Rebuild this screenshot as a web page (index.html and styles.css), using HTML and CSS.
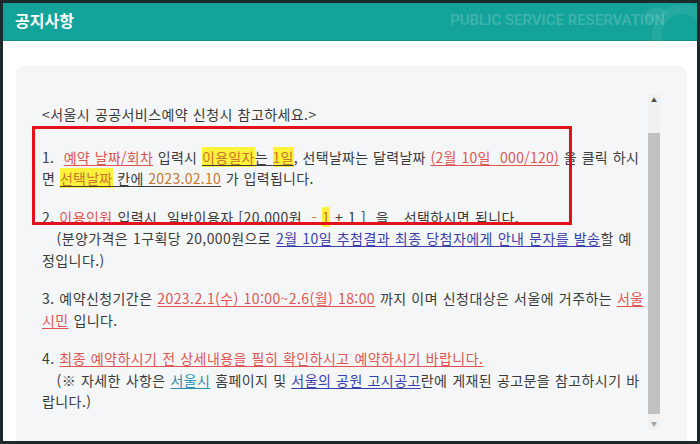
FILE: index.html
```html
<!DOCTYPE html>
<html lang="ko">
<head>
<meta charset="utf-8">
<title>공지사항</title>
<link rel="stylesheet" href="styles.css">
</head>
<body>
<div class="frame">
  <header class="header">
    <h1 class="title">공지사항</h1>
    <span class="tagline">PUBLIC SERVICE RESERVATION</span>
    <svg class="deco" width="60" height="38" viewBox="0 0 60 38" aria-hidden="true">
      <circle cx="46" cy="32" r="26" fill="none" stroke="rgba(255,255,255,0.07)" stroke-width="10"/>
      <path d="M6 12 C14 2 26 2 32 10 C24 12 16 16 12 22 Z" fill="rgba(255,255,255,0.08)"/>
    </svg>
  </header>
  <main class="body">
    <section class="panel">
      <div class="scrollarea">
        <div class="content">
          <p class="para first">&lt;서울시 공공서비스예약 신청시 참고하세요.&gt;</p>
          <p class="para tight">1.&nbsp; <span class="red u">예약 날짜/회차</span> 입력시 <span class="u"><span class="hl org">이용일자</span>는 <span class="hl org">1일</span></span>, 선택날짜는 달력날짜 <span class="red u">(2월 10일&nbsp; 000/120)</span> 을 클릭 하시면 <span class="u"><span class="hl org">선택날짜</span> 칸에 <span class="org">2023.02.10</span></span> 가 입력됩니다.</p>
          <p class="para">2. <span class="red">이용인원</span> 입력시&nbsp; 일반이용자 [20,000원&nbsp; <span class="org">-</span> <span class="hl org">1</span> + 1 ]&nbsp; 을&nbsp;&nbsp; 선택하시면 됩니다.<br>&nbsp;&nbsp; (분양가격은 1구획당 20,000원으로 <span class="blue u">2월 10일 추첨결과 최종 당첨자에게 안내 문자를 발송</span>할 예정입니다.)</p>
          <p class="para">3. 예약신청기간은 <span class="red u">2023.2.1(수) 10:00~2.6(월) 18:00</span> 까지 이며 신청대상은 서울에 거주하는 <span class="red u">서울시민</span> 입니다.</p>
          <p class="para">4. <span class="red u">최종 예약하시기 전 상세내용을 필히 확인하시고 예약하시기 바랍니다.</span><br>&nbsp;&nbsp; (※ 자세한 사항은 <span class="teal u">서울시</span> 홈페이지 및 <span class="blue u">서울의 공원 고시공고</span>란에 게재된 공고문을 참고하시기 바랍니다.)</p>
        </div>
        <div class="scrollbar">
          <span class="sb-btn">&#9650;</span>
          <div class="sb-track"><div class="sb-thumb"></div></div>
          <span class="sb-btn">&#9660;</span>
        </div>
        <div class="callout"></div>
      </div>
    </section>
  </main>
</div>
</body>
</html>
```
FILE: styles.css
```css
* { box-sizing: border-box; }
html, body { margin: 0; padding: 0; background: #ffffff; }
body { font-family: "Noto Sans CJK KR", "Noto Sans", sans-serif; }

.frame {
  width: 700px;
  height: 444px;
  border: 3px solid #1c2a2b;
  background: #ffffff;
  display: flex;
  flex-direction: column;
  overflow: hidden;
}

.header {
  height: 38px;
  flex: none;
  background: #14a39a;
  border-bottom: 1px solid #10918a;
  display: flex;
  align-items: center;
  padding: 0 0 0 12px;
  position: relative;
}
.title {
  margin: 0;
  font-size: 16px;
  font-weight: 700;
  color: #ffffff;
  flex: 1;
  line-height: 1;
  padding-bottom: 4px;
}
.tagline {
  font-family: Roboto, "Liberation Sans", sans-serif;
  font-size: 15px;
  font-weight: 500;
  color: rgba(255, 255, 255, 0.2);
  margin-right: 32px;
  padding-bottom: 4px;
}
.deco {
  position: absolute;
  right: 0;
  top: 0;
}

.body {
  flex: 1;
  padding: 25px 10px 3px 13px;
  display: flex;
}
.panel {
  flex: 1;
  background: #f5f6f8;
  border-radius: 8px;
  padding: 28px 27px 23px 14px;
  display: flex;
}
.scrollarea {
  flex: 1;
  display: flex;
  position: relative;
}
.content {
  flex: 1;
  padding: 10px 4px 0 12px;
  font-size: 14px;
  line-height: 21.5px;
  letter-spacing: 0.42px;
  word-spacing: 0.5px;
  color: #3b3b3b;
}
.para { margin: 0 0 17px 0; }
.para.first { margin-bottom: 21px; }
.para.tight { letter-spacing: 0.28px; }

.u { text-decoration: underline; text-underline-offset: 2px; }
.red { color: #e05552; }
.org { color: #c9752e; }
.hl { background: #fff23a; }
.blue { color: #3a3fae; }
.teal { color: #2e8fb5; }

.scrollbar {
  width: 12px;
  flex: none;
  background: #f1f1f1;
  display: flex;
  flex-direction: column;
}
.sb-btn {
  height: 12px;
  font-size: 6px;
  line-height: 12px;
  text-align: center;
  color: #505050;
  letter-spacing: 0;
}
.sb-btn:last-child { color: #a3a3a3; }
.sb-track {
  flex: 1;
  padding: 27px 0 4px 0;
  display: flex;
}
.sb-thumb {
  flex: 1;
  background: #c1c1c1;
}

.callout {
  position: absolute;
  left: 2px;
  top: 32px;
  width: 540px;
  height: 99px;
  border: 3px solid #e3121b;
  pointer-events: none;
}
```
